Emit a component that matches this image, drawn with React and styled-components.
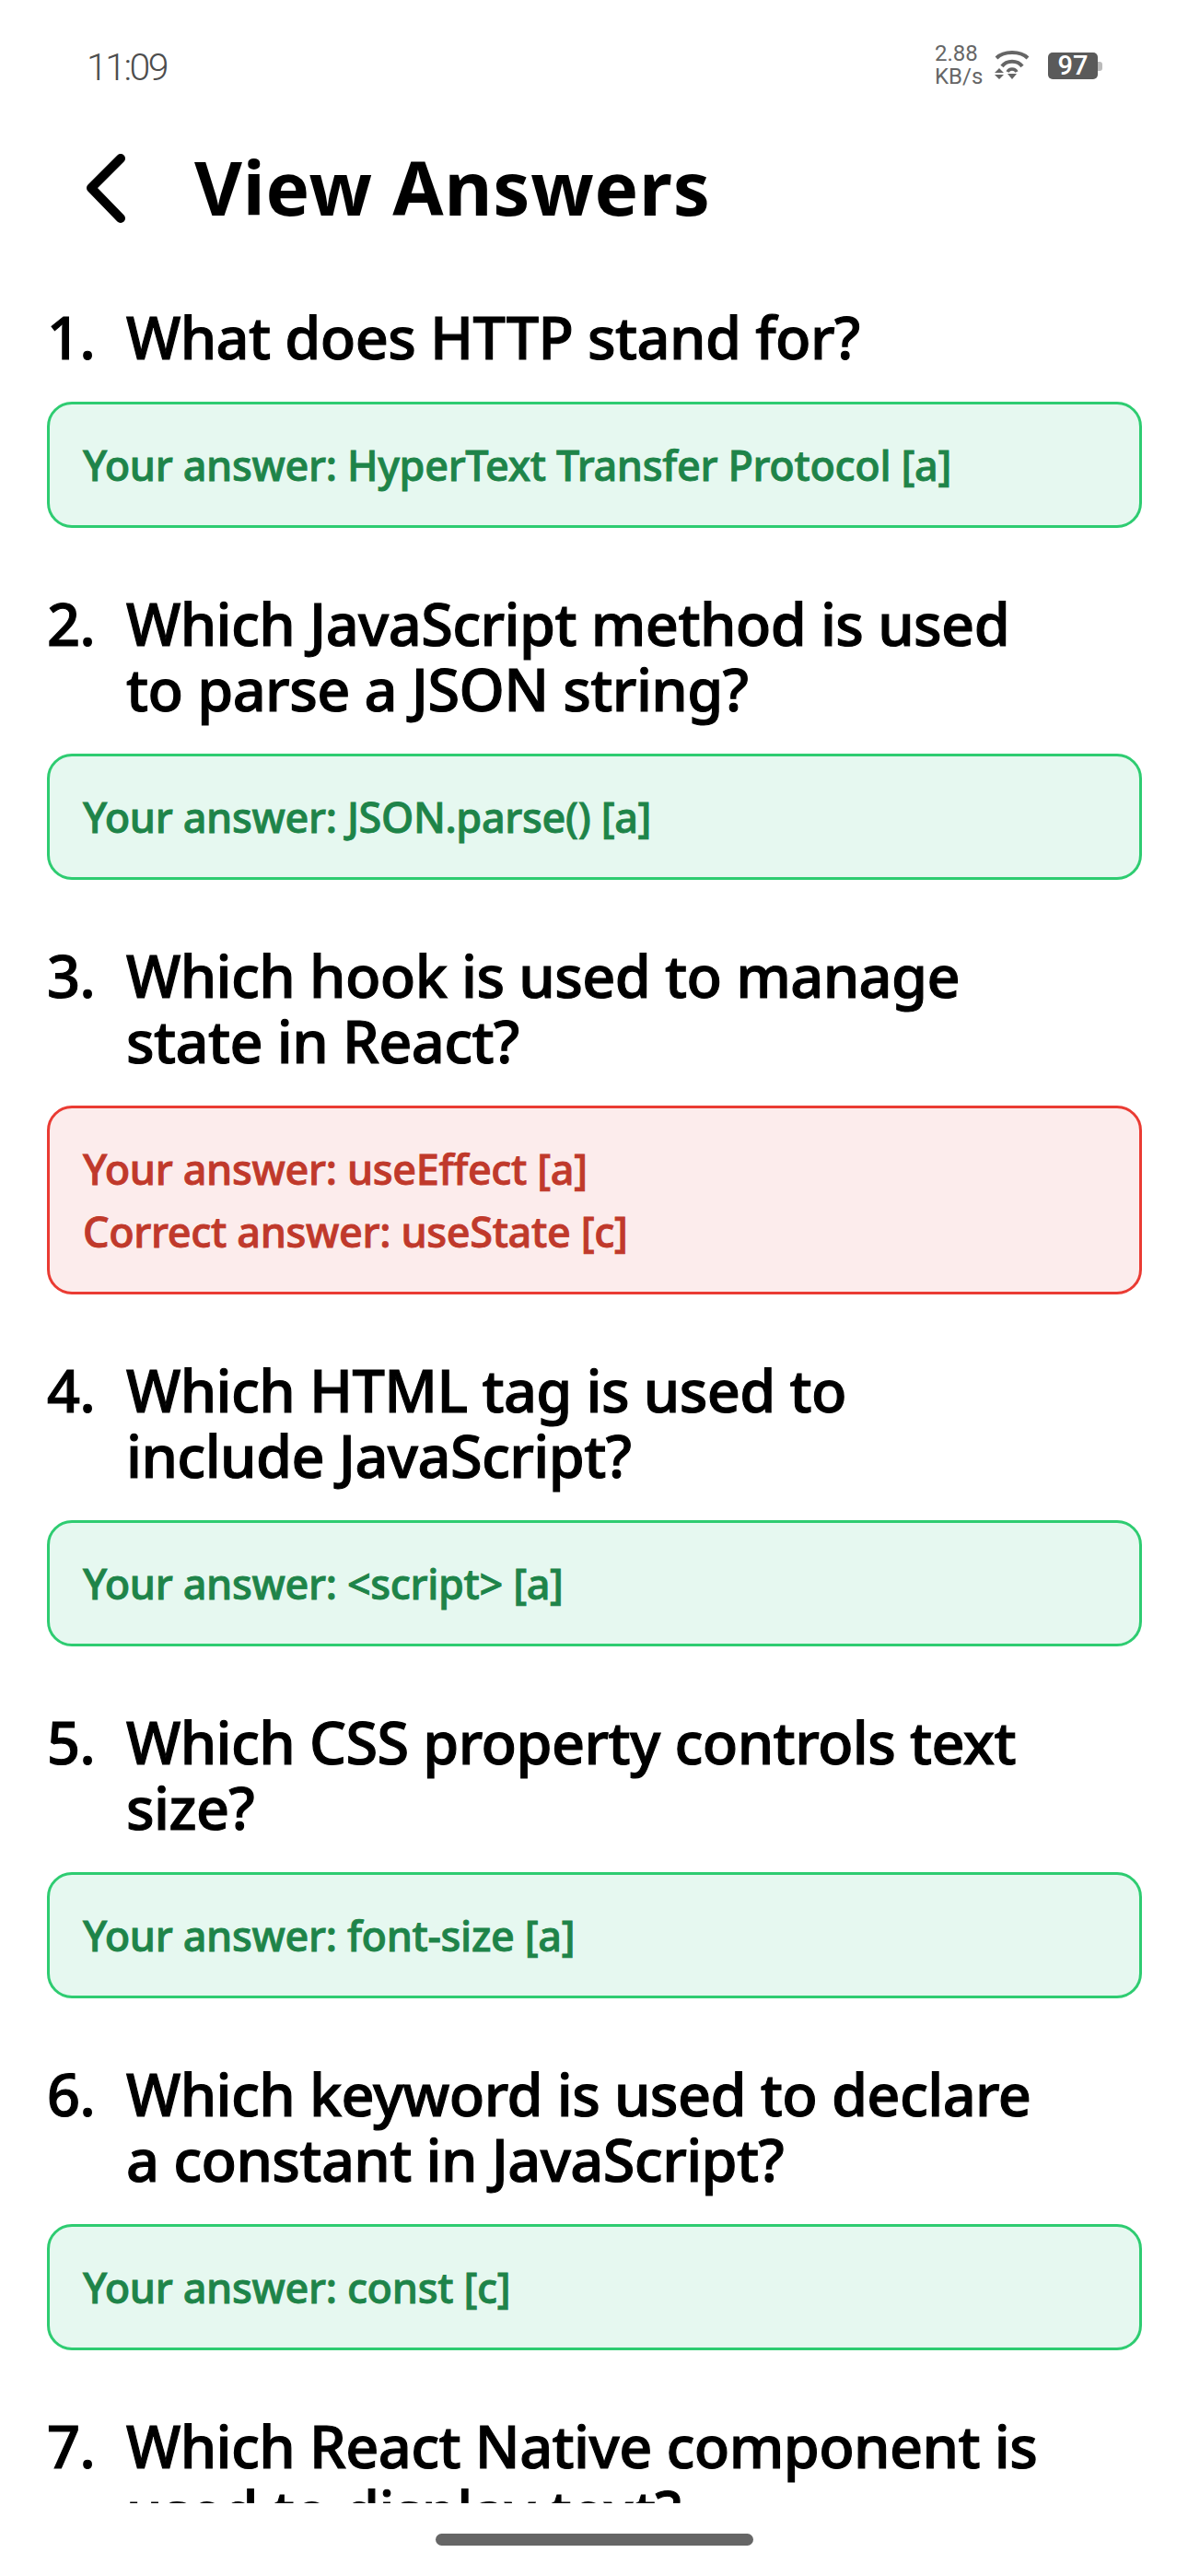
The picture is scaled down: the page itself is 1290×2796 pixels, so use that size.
import React from 'react';
import styled, { createGlobalStyle } from 'styled-components';

const GlobalStyle = createGlobalStyle`
  html, body {
    margin: 0;
    padding: 0;
    background: #fff;
  }
  * { box-sizing: border-box; }
`;

const Page = styled.div`
  width: 1290px;
  height: 2796px;
  display: flex;
  flex-direction: column;
  background: #fff;
  overflow: hidden;
  font-family: "Noto Sans", "Open Sans", sans-serif;
`;

const StatusBar = styled.div`
  height: 148px;
  flex: none;
  display: flex;
  justify-content: space-between;
  align-items: flex-start;
  padding: 49px 93px 0 94px;
`;

const Clock = styled.div`
  font-family: Roboto, sans-serif;
  font-size: 41px;
  font-weight: 300;
  line-height: 48px;
  letter-spacing: -2.5px;
  color: #4d4d4d;
`;

const StatusIcons = styled.div`
  display: flex;
  align-items: center;
  margin-top: -3px;
`;

const Speed = styled.div`
  font-family: Roboto, sans-serif;
  font-size: 24px;
  line-height: 25px;
  color: #666;
  width: 65px;
`;

const Battery = styled.div`
  position: relative;
  width: 54px;
  height: 29px;
  margin-left: 20px;
  margin-right: 5px;
  border-radius: 5px;
  background: #5a5a5a;
  color: #fff;
  font-family: Roboto, sans-serif;
  font-size: 29px;
  font-weight: 500;
  line-height: 29px;
  text-align: center;
  &::after {
    content: '';
    position: absolute;
    right: -5px;
    top: 10px;
    width: 5px;
    height: 10px;
    border-radius: 0 3px 3px 0;
    background: #bbb;
  }
`;

const Header = styled.div`
  height: 110px;
  flex: none;
  display: flex;
  align-items: center;
  padding-left: 88px;
  gap: 69px;
`;

const Title = styled.h1`
  margin: 0;
  font-size: 80px;
  font-weight: 700;
  line-height: 110px;
  color: #000;
  letter-spacing: 0.8px;
`;

const List = styled.div`
  flex: 1;
  min-height: 0;
  overflow: hidden;
  padding: 72px 50px 0 51px;
  display: flex;
  flex-direction: column;
  gap: 68px;
`;

const Question = styled.div`
  display: flex;
  font-size: 63px;
  font-weight: 500;
  line-height: 71px;
  color: #000;
  letter-spacing: -0.6px;
  -webkit-text-stroke: 1.1px #000;
  margin-bottom: 34.5px;
`;

const Num = styled.span`
  width: 86px;
  flex: none;
`;

const Line = styled.span`
  display: block;
  white-space: nowrap;
`;

const AnswerBox = styled.div`
  border: 3px solid ${p => (p.$wrong ? '#ea3b33' : '#2ecc71')};
  background: ${p => (p.$wrong ? '#fcecec' : '#e6f8f0')};
  color: ${p => (p.$wrong ? '#c0392b' : '#1e8449')};
  border-radius: 27px;
  padding: 32px 36px 31.5px;
  font-size: 45px;
  font-weight: 500;
  line-height: 68px;
  letter-spacing: -0.35px;
  -webkit-text-stroke: 0.9px ${p => (p.$wrong ? '#c0392b' : '#1e8449')};
`;

const HomeArea = styled.div`
  height: 79px;
  flex: none;
  display: flex;
  justify-content: center;
  padding-top: 33px;
`;

const HomeBar = styled.div`
  width: 345px;
  height: 13px;
  border-radius: 7px;
  background: #666;
`;

const questions = [
  { lines: ['What does HTTP stand for?'], answer: 'HyperText Transfer Protocol [a]' },
  { lines: ['Which JavaScript method is used', 'to parse a JSON string?'], answer: 'JSON.parse() [a]' },
  { lines: ['Which hook is used to manage', 'state in React?'], answer: 'useEffect [a]', correct: 'useState [c]' },
  { lines: ['Which HTML tag is used to', 'include JavaScript?'], answer: '<script> [a]' },
  { lines: ['Which CSS property controls text', 'size?'], answer: 'font-size [a]' },
  { lines: ['Which keyword is used to declare', 'a constant in JavaScript?'], answer: 'const [c]' },
  { lines: ['Which React Native component is', 'used to display text?'], answer: '<Text> [a]' },
];

function WifiIcon() {
  return (
    <svg width="38" height="34" viewBox="0 0 38 34" fill="none">
      <path d="M2 9 C10 1 28 1 36 9" stroke="#666" strokeWidth="4" />
      <path d="M8 18 C13 11 25 11 30 18" stroke="#666" strokeWidth="4" />
      <path d="M14 24 C16 20 22 20 24 24" stroke="#666" strokeWidth="3.5" />
      <path d="M5 20 L10 25 H0 Z M0 27 H10 L5 32 Z M14 26 H24 L19 32 Z" fill="#666" />
    </svg>
  );
}

function BackIcon() {
  return (
    <svg width="54" height="80" viewBox="0 0 54 80" fill="none">
      <polyline points="43,9 11,41 43,74" stroke="#000" strokeWidth="10" strokeLinecap="round" strokeLinejoin="round" />
    </svg>
  );
}

export default function App() {
  return (
    <Page>
      <GlobalStyle />
      <StatusBar>
        <Clock>11:09</Clock>
        <StatusIcons>
          <Speed>2.88<br />KB/s</Speed>
          <WifiIcon />
          <Battery>97</Battery>
        </StatusIcons>
      </StatusBar>
      <Header>
        <BackIcon />
        <Title>View Answers</Title>
      </Header>
      <List>
        {questions.map((q, i) => (
          <div key={i}>
            <Question>
              <Num>{i + 1}.</Num>
              <div>{q.lines.map(l => <Line key={l}>{l}</Line>)}</div>
            </Question>
            <AnswerBox $wrong={!!q.correct}>
              <div>Your answer: {q.answer}</div>
              {q.correct && <div>Correct answer: {q.correct}</div>}
            </AnswerBox>
          </div>
        ))}
      </List>
      <HomeArea>
        <HomeBar />
      </HomeArea>
    </Page>
  );
}
